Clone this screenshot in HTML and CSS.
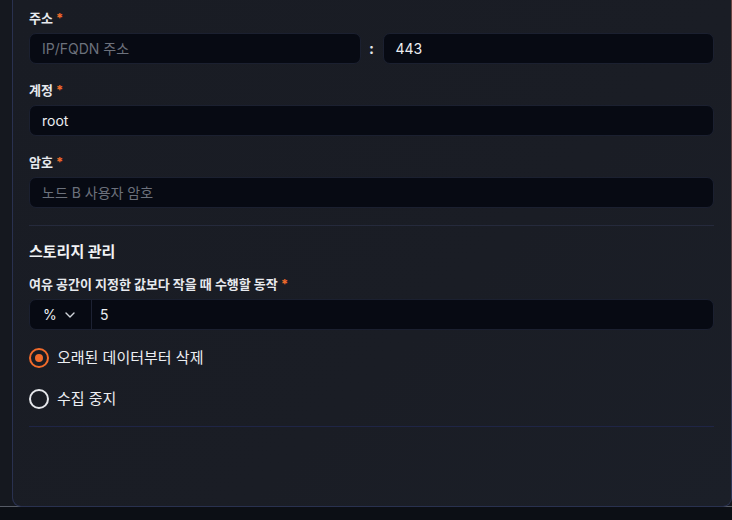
FILE: index.html
```html
<!DOCTYPE html>
<html lang="ko">
<head>
<meta charset="utf-8">
<title>노드 설정</title>
<link rel="stylesheet" href="styles.css">
</head>
<body>
<div class="stage">
  <div class="backdrop"></div>
  <section class="panel">
    <div class="field">
      <label class="label">주소 <span class="req">*</span></label>
      <div class="addr-row">
        <div class="input placeholder">IP/FQDN 주소</div>
        <span class="colon">:</span>
        <div class="input">443</div>
      </div>
    </div>
    <div class="field">
      <label class="label">계정 <span class="req">*</span></label>
      <div class="input">root</div>
    </div>
    <div class="field">
      <label class="label">암호 <span class="req">*</span></label>
      <div class="input placeholder">노드 B 사용자 암호</div>
    </div>
    <hr class="divider">
    <h3 class="section-title">스토리지 관리</h3>
    <div class="field tight">
      <label class="label">여유 공간이 지정한 값보다 작을 때 수행할 동작 <span class="req">*</span></label>
      <div class="input-group">
        <div class="unit-select">
          <span>%</span>
          <svg class="chev" width="10" height="6" viewBox="0 0 10 6"><polyline points="1,1 5,5 9,1" fill="none" stroke="#d1d5db" stroke-width="1.4" stroke-linecap="round" stroke-linejoin="round"/></svg>
        </div>
        <div class="group-value">5</div>
      </div>
    </div>
    <div class="radios">
      <div class="radio-row"><span class="radio checked"></span><span class="radio-text">오래된 데이터부터 삭제</span></div>
      <div class="radio-row"><span class="radio"></span><span class="radio-text">수집 중지</span></div>
    </div>
    <hr class="divider blue">
  </section>
</div>
</body>
</html>
```
FILE: styles.css
```css
* { box-sizing: border-box; }
html, body { margin: 0; padding: 0; }
body {
  background: #0c0f15;
  font-family: "Inter", "Noto Sans CJK KR", "Noto Sans", sans-serif;
  color: #e5e7eb;
  width: 732px;
  height: 520px;
  overflow: hidden;
}
.stage {
  display: grid;
  grid-template-columns: 1fr;
}
.backdrop {
  grid-area: 1 / 1;
  height: 507px;
  background: #15181f;
  border-bottom: 1px solid #565b66;
}
.panel {
  grid-area: 1 / 1;
  margin-left: 12px;
  width: 720px;
  height: 507px;
  border: 1px solid #29314f;
  border-top: none;
  border-right-color: transparent;
  border-radius: 0 0 9px 9px;
  background:
    linear-gradient(135deg, #191c24 0%, #1a1d25 60%, #1b1f28 100%) padding-box,
    linear-gradient(to bottom, #6a4542 0%, #5e4248 55%, #3a3a58 80%, #2c3558 100%) right top / 1px 100% no-repeat border-box,
    #29314f;
  padding: 9px 17px 0 16px;
  display: flex;
  flex-direction: column;
}
.field { display: flex; flex-direction: column; gap: 6px; margin-bottom: 17px; }
.field.tight { margin-bottom: 0; margin-top: 12px; }
.label {
  font-size: 13px;
  line-height: 18px;
  font-weight: 700;
  color: #e7e9ee;
}
.req { color: #f26b2b; font-weight: 700; }
.addr-row {
  display: grid;
  grid-template-columns: 1fr auto 1fr;
  align-items: center;
}
.colon {
  padding: 0 8px;
  width: 22px;
  text-align: center;
  font-size: 15px;
  font-weight: 700;
  color: #e5e7eb;
  line-height: 31px;
}
.input {
  height: 31px;
  background: #070a13;
  border: 1px solid #1b2030;
  border-radius: 7px;
  padding: 0 12px;
  font-size: 14px;
  line-height: 29px;
  color: #eceef2;
}
.input.placeholder { color: #6c717c; }
.divider {
  border: none;
  height: 1px;
  background: #252a3c;
  margin: 0;
  width: 100%;
}
.divider.blue { background: #1f2546; margin-top: 17px; }
.section-title {
  margin: 15px 0 0;
  font-size: 15px;
  line-height: 22px;
  font-weight: 700;
  color: #f1f2f4;
}
.input-group {
  display: flex;
  height: 31px;
  background: #070a13;
  border: 1px solid #1b2030;
  border-radius: 7px;
  font-size: 14px;
  color: #eceef2;
}
.unit-select {
  width: 62px;
  display: flex;
  align-items: center;
  gap: 8px;
  padding-left: 13px;
  border-right: 1px solid #1d2233;
}
.chev { display: block; }
.group-value { padding-left: 8px; line-height: 29px; }
.radios {
  display: flex;
  flex-direction: column;
  gap: 21px;
  margin-top: 18px;
}
.radio-row {
  display: flex;
  align-items: center;
  gap: 8px;
  height: 20px;
}
.radio {
  width: 20px;
  height: 20px;
  border-radius: 50%;
  border: 2px solid #e5e7eb;
  display: flex;
  align-items: center;
  justify-content: center;
}
.radio.checked { border-color: #f26b2b; }
.radio.checked::after {
  content: "";
  width: 8px;
  height: 8px;
  border-radius: 50%;
  background: #f26b2b;
}
.radio-text { font-size: 15px; line-height: 20px; color: #eceef2; }
```
